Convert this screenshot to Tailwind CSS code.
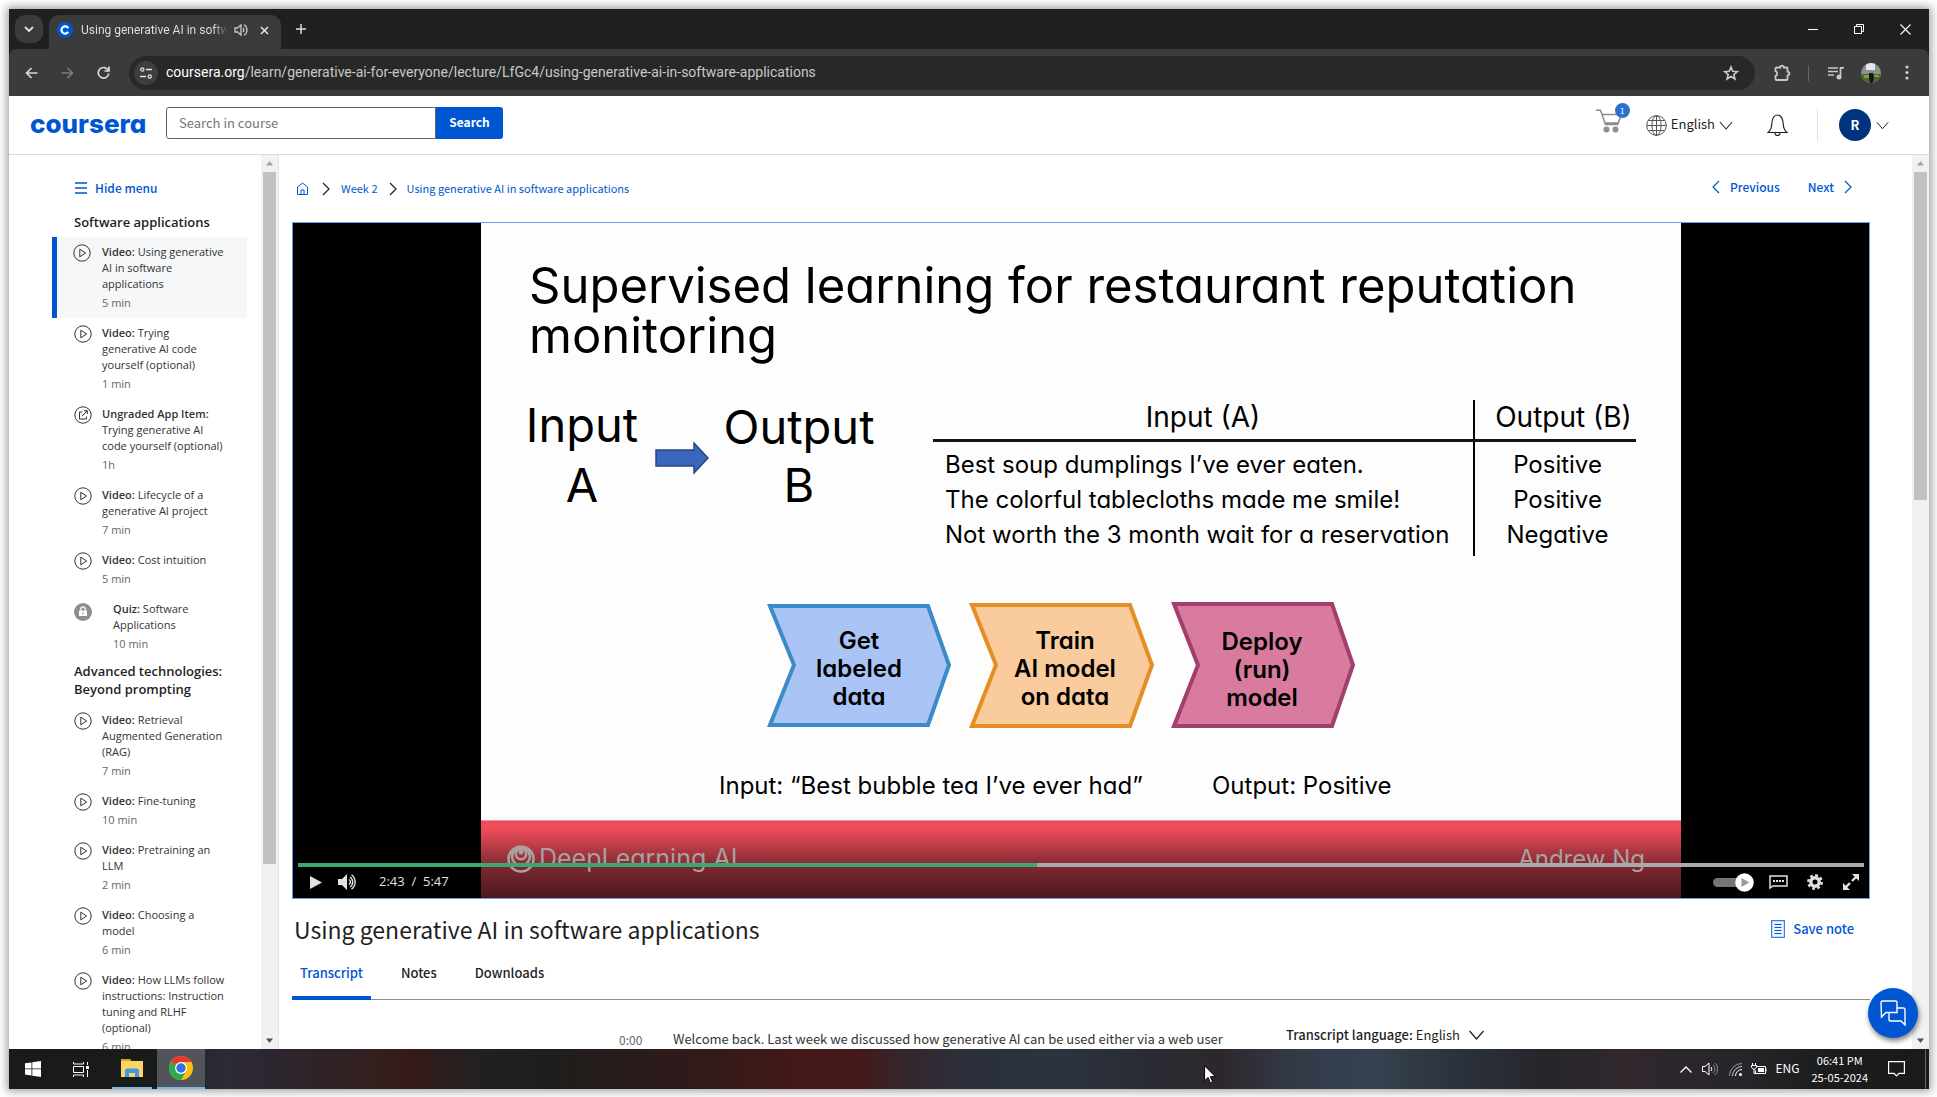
<!DOCTYPE html>
<html lang="en">
<head>
<meta charset="utf-8">
<title>Using generative AI in software applications | Coursera</title>
<script src="https://cdn.jsdelivr.net/npm/@tailwindcss/browser@4"></script>
</head>
<body class="h-screen overflow-hidden bg-white pt-[9px] pl-[9px] pr-2 pb-2 font-['Noto_Sans_CJK_SC','Open_Sans',sans-serif] text-[#1f1f1f]">
<svg class="hidden">
  <symbol id="play" viewBox="0 0 18 18"><circle cx="9" cy="9" r="8.2" fill="none" stroke="#333"/><path d="M6.8 5.2v7.6l5.8-3.8z" fill="none" stroke="#333"/></symbol>
  <symbol id="down" viewBox="0 0 16 10"><path d="M1 1l7 8 7-8" fill="none" stroke="currentColor" stroke-width="1.2"/></symbol>
  <symbol id="right" viewBox="0 0 8 14"><path d="M1 1l6 6-6 6" fill="none" stroke="currentColor" stroke-width="1.2"/></symbol>
  <symbol id="left" viewBox="0 0 8 14"><path d="M7 1L1 7l6 6" fill="none" stroke="currentColor" stroke-width="1.2"/></symbol>
</svg>
<div class="flex h-full flex-col overflow-hidden bg-white shadow-[0_0_9px_2px_rgba(0,0,0,0.4)]">

  <!-- Tab strip -->
  <div class="flex h-10 shrink-0 items-center bg-[#1f2120] text-[#dfe1df]">
    <button aria-label="Search tabs" class="ml-[6px] grid size-7 place-items-center rounded-[10px] bg-[#3b3b3b]"><svg width="10" height="7" viewBox="0 0 10 7"><path d="M1 1l4 4 4-4" fill="none" stroke="#e3e3e3" stroke-width="1.8"/></svg></button>
    <div class="ml-[6px] flex h-[34px] w-[232px] items-center self-end rounded-t-[10px] bg-[#3b3b3b] pb-1 pl-2 font-['Roboto',sans-serif] text-[12px]">
      <svg width="16" height="16" viewBox="0 0 16 16"><circle cx="8" cy="8" r="8" fill="#0056d2"/><path d="M11.2 6.2A3.6 3.6 0 1 0 11.2 9.8" fill="none" stroke="#fff" stroke-width="2.2"/></svg>
      <span class="ml-2 w-[147px] overflow-hidden whitespace-nowrap bg-linear-to-r from-[#e3e3e3] from-90% to-[#3b3b3b] bg-clip-text text-transparent">Using generative AI in software</span>
      <svg class="ml-[6px]" width="14" height="14" viewBox="0 0 14 14"><path d="M1 5h2.500L7 2v10L3.500 9H1z" fill="none" stroke="#c7c7c7" stroke-width="1.300"/><path d="M9 5a3 3 0 0 1 0 4M10 1.800a6 6 0 0 1 0 10.400" fill="none" stroke="#c7c7c7" stroke-width="1.300"/></svg>
      <button aria-label="Close tab" class="ml-3"><svg width="9" height="9" viewBox="0 0 9 9"><path d="M1 1l7 7M8 1L1 8" stroke="#e3e3e3" stroke-width="1.600"/></svg></button>
    </div>
    <button aria-label="New tab" class="ml-[14px]"><svg width="12" height="12" viewBox="0 0 12 12"><path d="M6 1v10M1 6h10" stroke="#dcdcdc" stroke-width="1.500"/></svg></button>
    <div class="ml-auto flex items-center gap-9 pr-[18px]">
      <button aria-label="Minimize"><svg width="10" height="10" viewBox="0 0 10 10"><path d="M0 5.500h10" stroke="#fff"/></svg></button>
      <button aria-label="Restore"><svg width="10" height="10" viewBox="0 0 10 10"><path d="M.5 2.500h7v7h-7zM2.500 2.500v-2h7v7h-2" fill="none" stroke="#fff"/></svg></button>
      <button aria-label="Close"><svg width="11" height="11" viewBox="0 0 11 11"><path d="M.5.5l10 10M10.500.5l-10 10" stroke="#fff" stroke-width="1.100"/></svg></button>
    </div>
  </div>

  <!-- Address bar -->
  <div class="shrink-0 bg-[#1f2120]">
  <div class="flex h-[47px] items-center rounded-t-[8px] bg-[#3b3b3b] pr-5 pl-4">
    <button aria-label="Back"><svg width="13" height="12" viewBox="0 0 13 12"><path d="M12.500 6H1.500M6.500 1l-5 5 5 5" fill="none" stroke="#d8d8d8" stroke-width="1.700"/></svg></button>
    <button aria-label="Forward" class="ml-[23px]"><svg width="13" height="12" viewBox="0 0 13 12"><path d="M.5 6h11M6.500 1l5 5-5 5" fill="none" stroke="#7d7d7d" stroke-width="1.700"/></svg></button>
    <button aria-label="Reload" class="ml-[23px]"><svg width="13" height="13" viewBox="0 0 13 13"><path d="M11.300 4.500A5.300 5.300 0 1 0 11.800 7.500M12 .5v4.500H7.500" fill="none" stroke="#d8d8d8" stroke-width="1.700"/></svg></button>
    <div class="ml-[19px] flex h-[34px] flex-1 items-center rounded-full bg-[#282828] pr-4 pl-[5px]">
      <span class="grid size-6 place-items-center rounded-full bg-[#3e3e3e]"><svg width="12" height="12" viewBox="0 0 12 12"><path d="M6 2.500h6M0 9.500h6" stroke="#e0e0e0" stroke-width="1.600"/><circle cx="2.300" cy="2.500" r="1.600" fill="none" stroke="#e0e0e0" stroke-width="1.300"/><circle cx="9.700" cy="9.500" r="1.600" fill="none" stroke="#e0e0e0" stroke-width="1.300"/></svg></span>
      <span class="ml-2 font-['Roboto',sans-serif] text-[14px] text-[#c7c7c7]"><span class="text-white">coursera.org</span>/learn/generative-ai-for-everyone/lecture/LfGc4/using-generative-ai-in-software-applications</span>
      <svg class="ml-auto" width="16" height="16" viewBox="0 0 24 24"><path d="M12 3l2.600 6.400 6.900.5-5.300 4.400 1.700 6.700-5.900-3.700L6.100 21l1.700-6.700L2.500 9.900l6.900-.5z" fill="none" stroke="#c9c9c9" stroke-width="2.400"/></svg>
    </div>
    <div class="ml-[19px] flex items-center">
      <svg width="17" height="18" viewBox="0 0 17 18"><path d="M2.500 3.500h3.700a1.600 1.600 0 0 1 3.600 0h2.700a1 1 0 0 1 1 1v3.200a1.700 1.700 0 0 1 0 3.600v3.700a1 1 0 0 1-1 1h-10a1 1 0 0 1-1-1v-3.200a2.400 2.400 0 0 0 0-4.600V4.500a1 1 0 0 1 1-1z" fill="none" stroke="#c9c9c9" stroke-width="1.800"/></svg>
      <span class="ml-[17px] h-4 w-px bg-[#666]"></span>
      <svg class="ml-[19px]" width="16" height="14" viewBox="0 0 16 14"><path d="M0 2h10M0 5.500h10M0 9h6" stroke="#c9c9c9" stroke-width="1.700"/><path d="M12.500 11V1.800H16" fill="none" stroke="#c9c9c9" stroke-width="1.700"/><circle cx="11" cy="11" r="2.500" fill="#c9c9c9"/></svg>
      <svg class="ml-[17px]" width="20" height="20" viewBox="0 0 20 20"><defs><clipPath id="av"><circle cx="10" cy="10" r="10"/></clipPath></defs><g clip-path="url(#av)"><path fill="#8d8f91" d="M0 0h20v20H0z"/><path fill="#e4e6e8" d="M5 0h9v7H5z"/><path fill="#4d6b22" d="M0 11h20v9H0z"/><path fill="#7fa03a" d="M3 12h5v3H3zM13 12h5v2h-5z"/><path fill="#15171c" d="M8 10h4l1 4-1 6H9l-1-5z"/></g></svg>
      <svg class="ml-6" width="4" height="15" viewBox="0 0 4 15"><g fill="#d0d0d0"><circle cx="2" cy="2" r="1.600"/><circle cx="2" cy="7.500" r="1.600"/><circle cx="2" cy="13" r="1.600"/></g></svg>
    </div>
  </div>
  </div>

  <!-- Site header -->
  <header class="flex h-[59px] shrink-0 items-center border-b border-[#dadce0] bg-white pr-10 pl-[21px]">
    <a href="#" class="w-[136px] pb-[2px] font-['Inter',sans-serif] text-[26px] leading-8 font-extrabold text-[#0056d2] [font-feature-settings:'cv11']">coursera</a>
    <form class="-mt-1 flex">
      <input aria-label="Search in course" placeholder="Search in course" class="h-8 w-[270px] rounded-l-[3px] border border-[#636363] px-3 pb-[2px] font-['Noto_Sans_CJK_SC',sans-serif] text-[13px] placeholder:text-[#757575]">
      <button type="button" class="h-8 w-[67px] rounded-r-[3px] bg-[#0056d2] pb-[2px] text-[12px] font-bold text-white">Search</button>
    </form>
    <div class="ml-auto flex items-center">
      <a href="#" aria-label="Cart" class="relative -mt-3 block h-7 w-[34px]">
        <svg width="28" height="24" viewBox="0 0 28 24" class="mt-1"><path d="M0 1.200h4.500l5 14.300h13M5.800 5.500h19.500l-3 8.500H8.800" fill="none" stroke="#8a8a8a" stroke-width="1.500"/><circle cx="10.500" cy="20.500" r="3" fill="#8f8f8f"/><circle cx="19.500" cy="20.500" r="3" fill="#8f8f8f"/></svg>
        <span class="absolute -top-[2px] right-0 grid size-[15px] place-items-center rounded-full bg-[#2a73cc] text-[8px] leading-none text-white">1</span>
      </a>
      <button class="ml-4 flex items-center text-[13px]">
        <svg width="21" height="21" viewBox="0 0 21 21"><g fill="none" stroke="#555"><circle cx="10.500" cy="10.500" r="9.800"/><ellipse cx="10.500" cy="10.500" rx="4.600" ry="9.800"/><path d="M10.500.7v19.600M.7 10.500h19.600M2.200 5.500h16.600M2.200 15.500h16.600"/></g></svg>
        <span class="ml-1 pb-[2px]">English</span>
        <svg class="ml-1" width="14" height="9"><use href="#down"/></svg>
      </button>
      <button aria-label="Notifications" class="ml-[34px]"><svg width="21" height="23" viewBox="0 0 21 23"><path d="M1 18.500c2.500-2 3.500-4 3.700-8C5 5 6.500 1 10.500 1s5.500 4 5.800 9.500c.2 4 1.200 6 3.700 8zM8 19a2.500 2.500 0 0 0 5 0" fill="none" stroke="#1f1f1f" stroke-width="1.200"/></svg></button>
      <span class="ml-[29px] h-8 w-px bg-[#e0e0e0]"></span>
      <button class="ml-[21px] flex items-center">
        <span class="grid size-8 place-items-center rounded-full bg-[#00337d] text-[13px] font-bold text-white">R</span>
        <svg class="ml-[5px]" width="13" height="9"><use href="#down"/></svg>
      </button>
    </div>
  </header>

  <div class="relative flex min-h-0 flex-1">
    <!-- Course sidebar -->
    <aside class="flex w-[270px] shrink-0 border-r border-[#e5e5e5]">
      <div class="flex-1 overflow-hidden pr-[14px] pl-[43px] font-['Open_Sans',sans-serif]">
        <button class="mt-[23px] ml-[23px] flex items-center gap-2 font-['Noto_Sans_CJK_SC',sans-serif] text-[12px] leading-5 font-medium text-[#0056d2]">
          <svg width="12" height="12" viewBox="0 0 12 12"><path d="M0 1h12M0 6h12M0 11h12" stroke="#0056d2" stroke-width="1.600"/></svg>Hide menu</button>
        <h2 class="mt-[15px] pl-[22px] text-[13px] leading-[18px] font-semibold">Software applications</h2>
        <ul class="mt-[6px] text-[11px] leading-4 text-[#333]">
          <li><a href="#" class="flex border-l-[5px] border-[#0056d2] bg-[#f5f7f8] pt-[7px] pr-4 pb-[6px] pl-4"><svg class="mr-[11px] size-[18px] shrink-0"><use href="#play"/></svg><span><span class="font-semibold">Video:</span> Using generative AI in software applications<span class="block pt-[2px] leading-[18px] text-[#666]">5 min</span></span></a></li>
          <li><a href="#" class="flex pt-[7px] pr-4 pb-[6px] pl-[22px]"><svg class="mr-[10px] size-[18px] shrink-0"><use href="#play"/></svg><span><span class="font-semibold">Video:</span> Trying<br>generative AI code yourself (optional)<span class="block pt-[2px] leading-[18px] text-[#666]">1 min</span></span></a></li>
          <li><a href="#" class="flex pt-[7px] pr-4 pb-[6px] pl-[22px]"><svg class="mr-[10px] size-[18px] shrink-0" viewBox="0 0 18 18"><g fill="none" stroke="#333"><circle cx="9" cy="9" r="8.200"/><path d="M8.200 6H5.500v7h7v-2.500M8 10.200l5-5.200M10 4.700h3.300V8"/></g></svg><span><span class="font-semibold">Ungraded App Item:</span> Trying generative AI<br>code yourself (optional)<span class="block pt-[2px] leading-[18px] text-[#666]">1h</span></span></a></li>
          <li><a href="#" class="flex pt-[7px] pr-4 pb-[6px] pl-[22px]"><svg class="mr-[10px] size-[18px] shrink-0"><use href="#play"/></svg><span><span class="font-semibold">Video:</span> Lifecycle of a generative AI project<span class="block pt-[2px] leading-[18px] text-[#666]">7 min</span></span></a></li>
          <li><a href="#" class="flex pt-[7px] pr-4 pb-[6px] pl-[22px]"><svg class="mr-[10px] size-[18px] shrink-0"><use href="#play"/></svg><span><span class="font-semibold">Video:</span> Cost intuition<span class="block pt-[2px] leading-[18px] text-[#666]">5 min</span></span></a></li>
          <li><a href="#" class="flex pt-[7px] pr-4 pb-[6px] pl-[22px]"><svg class="mt-[2px] mr-[21px] size-[18px] shrink-0" viewBox="0 0 18 18"><circle cx="9" cy="9" r="9" fill="#8f8f8f"/><path d="M5 7.500h8V13H5z" fill="#fff"/><path d="M6.800 7.500V6a2.200 2.200 0 0 1 4.400 0v1.500" fill="none" stroke="#fff" stroke-width="1.300"/><circle cx="9" cy="10.300" r=".8" fill="#8f8f8f"/></svg><span><span class="font-semibold">Quiz:</span> Software Applications<span class="block pt-[2px] leading-[18px] text-[#666]">10 min</span></span></a></li>
        </ul>
        <h2 class="mt-[3px] pl-[22px] text-[13px] leading-[18px] font-semibold">Advanced technologies: Beyond prompting</h2>
        <ul class="mt-[7px] text-[11px] leading-4 text-[#333]">
          <li><a href="#" class="flex pt-[7px] pr-4 pb-[6px] pl-[22px]"><svg class="mr-[10px] size-[18px] shrink-0"><use href="#play"/></svg><span><span class="font-semibold">Video:</span> Retrieval Augmented Generation (RAG)<span class="block pt-[2px] leading-[18px] text-[#666]">7 min</span></span></a></li>
          <li><a href="#" class="flex pt-[7px] pr-4 pb-[6px] pl-[22px]"><svg class="mr-[10px] size-[18px] shrink-0"><use href="#play"/></svg><span><span class="font-semibold">Video:</span> Fine-tuning<span class="block pt-[2px] leading-[18px] text-[#666]">10 min</span></span></a></li>
          <li><a href="#" class="flex pt-[7px] pr-4 pb-[6px] pl-[22px]"><svg class="mr-[10px] size-[18px] shrink-0"><use href="#play"/></svg><span><span class="font-semibold">Video:</span> Pretraining an LLM<span class="block pt-[2px] leading-[18px] text-[#666]">2 min</span></span></a></li>
          <li><a href="#" class="flex pt-[7px] pr-4 pb-[6px] pl-[22px]"><svg class="mr-[10px] size-[18px] shrink-0"><use href="#play"/></svg><span><span class="font-semibold">Video:</span> Choosing a<br>model<span class="block pt-[2px] leading-[18px] text-[#666]">6 min</span></span></a></li>
          <li><a href="#" class="flex pt-[7px] pr-4 pb-[6px] pl-[22px]"><svg class="mr-[10px] size-[18px] shrink-0"><use href="#play"/></svg><span><span class="font-semibold">Video:</span> How LLMs follow instructions: Instruction tuning and RLHF (optional)<span class="block pt-[2px] leading-[18px] text-[#666]">6 min</span></span></a></li>
        </ul>
      </div>
      <div class="flex w-[17px] shrink-0 flex-col items-center bg-[#f1f1f1]">
        <svg class="my-[6px] shrink-0" width="7" height="5"><path d="M0 4.500h7L3.500 0z" fill="#a3a3a3"/></svg>
        <div class="h-[692px] w-[13px] shrink-0 bg-[#c1c1c1]"></div>
        <svg class="mt-auto mb-[6px] shrink-0" width="7" height="5"><path d="M0 .5h7L3.500 5z" fill="#505050"/></svg>
      </div>
    </aside>

    <!-- Lecture -->
    <main class="min-w-0 flex-1 overflow-hidden pr-[42px] pl-[13px]">
      <div class="flex h-[67px] items-center justify-between text-[#0056d2]">
        <nav class="flex items-center text-[11px]">
          <a href="#" aria-label="Home" class="ml-1"><svg width="13" height="13" viewBox="0 0 13 13"><path d="M1.500 5v7.500h10V5L6.500 1zM5 12.500V8h3v4.500" fill="none" stroke="#0056d2"/></svg></a>
          <svg class="ml-[13px] text-[#1f1f1f]" width="8" height="14"><use href="#right"/></svg>
          <a href="#" class="ml-[11px]">Week 2</a>
          <svg class="ml-[11px] text-[#1f1f1f]" width="8" height="14"><use href="#right"/></svg>
          <a href="#" class="ml-[10px]">Using generative AI in software applications</a>
        </nav>
        <div class="flex items-center pr-[18px] pb-1 text-[12px] font-medium">
          <a href="#" class="flex items-center gap-[10px]"><svg width="8" height="14"><use href="#left"/></svg>Previous</a>
          <a href="#" class="ml-7 flex items-center gap-[10px]">Next<svg width="8" height="14"><use href="#right"/></svg></a>
        </div>
      </div>

      <!-- Video player -->
      <section class="relative h-[677px] border border-[#6b9bea] bg-black">
        <div class="relative mx-auto h-full w-[1200px] overflow-hidden bg-[#fdfdfd] font-['Inter',sans-serif] text-black [font-feature-settings:'cv11']">
          <h3 class="absolute top-[38px] left-12 text-[49px] leading-[50px] whitespace-nowrap">Supervised learning for restaurant reputation<br>monitoring</h3>
          <div class="absolute top-[172px] left-[36px] w-[130px] text-center text-[47px] leading-[60px]">Input<br>A</div>
          <svg class="absolute top-[219px] left-[174px]" width="54" height="32" viewBox="0 0 54 32"><path d="M1 8h38V1l14 15-14 15v-7H1z" fill="#3a66bd" stroke="#28477f" stroke-width="1.500"/></svg>
          <div class="absolute top-[175px] left-[228px] w-[180px] text-center text-[47px] leading-[58px]">Output<br>B</div>
          <table class="absolute top-[177px] left-[452px] w-[703px] border-collapse text-[24px] leading-[35px] whitespace-nowrap">
            <thead><tr class="border-b-[3px] border-[#151515] text-[28px]"><th class="w-[541px] border-r-2 border-black pb-1 font-normal">Input (A)</th><th class="pb-1 pl-4 font-normal">Output (B)</th></tr></thead>
            <tbody><tr><td class="border-r-2 border-black pt-[5px] pl-3">Best soup dumplings I’ve ever eaten.</td><td class="pt-[5px] pl-1 text-center">Positive</td></tr>
            <tr><td class="border-r-2 border-black pl-3">The colorful tablecloths made me smile!</td><td class="pl-1 text-center">Positive</td></tr>
            <tr><td class="border-r-2 border-black pb-1 pl-3">Not worth the 3 month wait for a reservation</td><td class="pb-1 pl-1 text-center">Negative</td></tr></tbody>
          </table>
          <svg class="absolute top-[379px] left-[286px]" width="590" height="128" viewBox="0 0 590 128"><g stroke-width="4"><path d="M3 4h158l21 59-21 60H3l24-60z" fill="#a9c4f5" stroke="#3d8ac9"/><path d="M205 3h158l22 60-22 61H205l24-61z" fill="#facb9c" stroke="#e38f25"/><path d="M407 2h158l21 61-21 61H407l24-61z" fill="#d87b9f" stroke="#a23f6e"/></g></svg>
          <div class="absolute top-[404px] left-[323px] w-[110px] text-center text-[24px] leading-7 font-semibold">Get<br>labeled<br>data</div>
          <div class="absolute top-[404px] left-[519px] w-[130px] text-center text-[24px] leading-7 font-semibold">Train<br>AI model<br>on data</div>
          <div class="absolute top-[405px] left-[726px] w-[110px] text-center text-[24px] leading-7 font-semibold">Deploy<br>(run)<br>model</div>
          <div class="absolute top-[547px] left-[238px] text-[24px] leading-8 whitespace-nowrap">Input: “Best bubble tea I’ve ever had”</div>
          <div class="absolute top-[547px] left-[731px] text-[24px] leading-8 whitespace-nowrap">Output: Positive</div>
          <div class="absolute inset-x-0 bottom-0 flex h-[78px] items-center justify-between border-t border-[#f3939b] bg-linear-to-b from-[#f04d5b] from-10% via-[#7d2830] via-60% to-[#4c191e] px-[26px] pb-[2px] text-[25px] text-[#aaa09f]">
            <span class="flex items-center gap-1"><svg width="28" height="28" viewBox="0 0 28 28"><g fill="none" stroke="#aaa09f" stroke-width="2.600"><circle cx="14" cy="14" r="12.500"/><circle cx="14" cy="11.500" r="9"/><circle cx="14" cy="9" r="5.200"/></g><circle cx="14" cy="7" r="2.500" fill="#aaa09f"/></svg>DeepLearning.AI</span>
            <span class="pr-[10px] text-[24px]">Andrew Ng</span>
          </div>
        </div>
        <div class="absolute inset-x-[5px] bottom-[31px] h-1 bg-[#aaa]"><div class="h-full bg-[#3aa971]" style="width:47.200%"></div></div>
        <div class="absolute inset-x-0 bottom-0 flex h-8 items-center pr-[10px] pl-[17px] font-['Open_Sans',sans-serif] text-[13px] text-[#e2e2e2]">
          <button aria-label="Pause"><svg width="12" height="13"><path d="M0 0v13l12-6.500z" fill="#e2e2e2"/></svg></button>
          <button aria-label="Mute" class="ml-4"><svg width="19" height="16" viewBox="0 0 19 16"><path d="M0 5h4l5-5v16l-5-5H0z" fill="#e2e2e2"/><path d="M11 5.500a3 3 0 0 1 0 5M12 3a6 6 0 0 1 0 10M13.500.8a9 9 0 0 1 0 14.400" fill="none" stroke="#e2e2e2" stroke-width="1.400"/></svg></button>
          <span class="ml-[22px] whitespace-pre">2:43  /  5:47</span>
          <button aria-label="Autoplay" class="ml-auto"><svg width="41" height="19" viewBox="0 0 41 19"><rect y="5" width="34" height="9" rx="4.500" fill="#757575"/><circle cx="31.500" cy="9.500" r="9.300" fill="#fff"/><path d="M28.500 5v9l8-4.500z" fill="#9a9a9a"/></svg></button>
          <button aria-label="Subtitles" class="ml-[15px]"><svg width="19" height="14" viewBox="0 0 19 14"><path d="M1 13V1h17v10H4z" fill="none" stroke="#e2e2e2" stroke-width="1.500"/><path d="M4 6h11" stroke="#e2e2e2" stroke-width="2" stroke-dasharray="2 1"/></svg></button>
          <button aria-label="Settings" class="ml-[19px]"><svg width="16" height="16" viewBox="0 0 16 16"><circle cx="8" cy="8" r="4.200" fill="none" stroke="#e2e2e2" stroke-width="3.400"/><circle cx="8" cy="8" r="6.700" fill="none" stroke="#e2e2e2" stroke-width="2.400" stroke-dasharray="2.800 2.460"/></svg></button>
          <button aria-label="Full screen" class="ml-5"><svg width="16" height="16" viewBox="0 0 16 16"><path d="M9 0h7v7zM0 9v7h7z" fill="#e2e2e2"/><path d="M14 2L9 7M7 9l-5 5" stroke="#e2e2e2" stroke-width="2.400"/></svg></button>
        </div>
      </section>

      <div class="flex h-[63px] items-center justify-between pr-4 pb-[3px] pl-[2px]">
        <h1 class="text-[23px] leading-8">Using generative AI in software applications</h1>
        <button class="flex items-center gap-2 text-[13px] font-medium text-[#0056d2]"><svg width="14" height="18" viewBox="0 0 14 18"><path d="M.6.600h12.800v16.800H.6z" fill="#eef4ff" stroke="#3f7fe0" stroke-width="1.200"/><path d="M3.500 4.500h7M3.500 7.500h7M3.500 10.500h7M3.500 13.500h7" stroke="#0056d2"/></svg>Save note</button>
      </div>
      <div class="flex h-[38px] gap-[22px] border-b border-[#8f8f8f] text-[13px] font-medium">
        <button class="h-[38px] border-b-4 border-[#0056d2] px-2 pb-3 text-[#0056d2]">Transcript</button>
        <button class="px-2 pb-4">Notes</button>
        <button class="px-2 pb-4">Downloads</button>
      </div>
      <div class="flex pt-[23px] text-[13px] leading-6">
        <span class="ml-[327px] w-[54px] pt-[5px] text-[12px] text-[#666]">0:00</span>
        <p class="w-[613px] pt-1 whitespace-nowrap text-[#333]">Welcome back. Last week we discussed how generative AI can be used either via a web user</p>
        <button class="flex h-6 items-center gap-2"><span><span class="font-medium">Transcript language:</span> English</span><svg width="17" height="10"><use href="#down"/></svg></button>
      </div>
    </main>
    <div class="flex w-[17px] shrink-0 flex-col items-center bg-[#f1f1f1]">
      <svg class="my-[6px] shrink-0" width="7" height="5"><path d="M0 4.500h7L3.500 0z" fill="#a3a3a3"/></svg>
      <div class="h-[328px] w-[13px] shrink-0 bg-[#c1c1c1]"></div>
      <svg class="mt-auto mb-[6px] shrink-0" width="7" height="5"><path d="M0 .5h7L3.500 5z" fill="#505050"/></svg>
    </div>
    <button aria-label="Chat" class="absolute right-[11px] bottom-[11px] grid size-[50px] place-items-center rounded-full bg-[#0056d2] shadow-[1px_3px_5px_rgba(0,0,0,0.5)]"><svg width="26" height="26" viewBox="0 0 26 26"><path d="M1 2.500A1.500 1.500 0 0 1 2.500 1h13A1.500 1.500 0 0 1 17 2.500v10H6l-4.500 4.500zM17 8h6.500A1.500 1.500 0 0 1 25 9.500V25l-4-4H10.500A1.500 1.500 0 0 1 9 19.500V12.500" fill="none" stroke="#fff" stroke-width="1.400"/></svg></button>
  </div>

  <!-- Taskbar -->
  <footer class="relative flex h-10 shrink-0 items-center bg-[linear-gradient(90deg,#191a1a_0%,#191a1a_8%,#2b2b38_11%,#2d252f_14%,#33201f_19%,#36191a_21%,#232020_24%,#1f1e1c_28%,#2e1a1a_35%,#431917_41%,#451917_44%,#33272f_47%,#2b303b_50%,#2c333f_55%,#292a31_60%,#2d272c_63%,#333a48_67%,#354250_71%,#2a303a_76%,#26262b_80%,#30272d_84%,#27262a_90%,#1b1c1c_95%,#191a1a_100%)] font-['Noto_Sans_CJK_SC',sans-serif] text-[12px] text-white">
    <button aria-label="Start" class="ml-4"><svg width="16" height="16" viewBox="0 0 16 16"><path d="M0 2.300L6.500 1.400v6.100H0zM7.300 1.300L16 0v7.500H7.300zM0 8.300h6.500v6.200L0 13.600zM7.300 8.300H16V16l-8.700-1.300z" fill="#fff"/></svg></button>
    <button aria-label="Task view" class="ml-8"><svg width="16" height="15" viewBox="0 0 16 15"><path d="M.5 4.500h10v6H.5zM.5 0v2h10V0M.5 15v-2h10v2M14.500 0v3M14.500 8v7" fill="none" stroke="#fff"/><path d="M13 4h3v3h-3z" fill="#fff"/></svg></button>
    <button aria-label="File Explorer" class="ml-[23px] flex h-full w-10 items-center justify-center border-b-2 border-[#76b9ed]"><svg width="22" height="18" viewBox="0 0 22 18"><path d="M0 0h9l2 2.500h-11z" fill="#e0a11b"/><path d="M0 2h22v16H0z" fill="#fdd467"/><path d="M4 18v-7l2-1.500h10l2 1.500v7h-4v-4H8v4z" fill="#3f9be0"/></svg></button>
    <button aria-label="Chrome" class="ml-[5px] flex h-full w-12 items-center justify-center border-b-2 border-[#76b9ed] bg-[#515459]"><svg width="24" height="24" viewBox="0 0 24 24"><circle cx="12" cy="12" r="12" fill="#fbc116"/><path d="M12 12L1.600 6A12 12 0 0 1 22.400 6z" fill="#e33b2e"/><path d="M1.600 6A12 12 0 0 0 12 24l5.200-9L12 12z" fill="#2da94f"/><path d="M12 6h10.400L17.200 15 12 12z" fill="#fbc116"/><circle cx="12" cy="12" r="6" fill="#fff"/><circle cx="12" cy="12" r="4.700" fill="#3372e5"/></svg></button>
    <div class="ml-auto flex h-full items-center">
      <svg width="12" height="7" viewBox="0 0 12 7"><path d="M.5 6.500l5.500-5.500 5.500 5.500" fill="none" stroke="#fff" stroke-width="1.300"/></svg>
      <svg class="ml-[10px]" width="16" height="14" viewBox="0 0 16 14"><path d="M.5 4.500h2.500l4-3.500v12L3 9.500H.5z" fill="none" stroke="#fff"/><path d="M9 5a3 3 0 0 1 0 4" fill="none" stroke="#fff"/><path d="M11 3a5 5 0 0 1 0 8M13 1a8 8 0 0 1 0 12" fill="none" stroke="#888"/></svg>
      <svg class="ml-[11px]" width="13" height="13" viewBox="0 0 13 13"><g fill="none" stroke="#999"><path d="M.5 13A12.500 12.500 0 0 1 13 .5"/><path d="M3.500 13A9.500 9.500 0 0 1 13 3.500" stroke="#ccc"/><path d="M6.500 13A6.500 6.500 0 0 1 13 6.500" stroke="#fff"/></g><circle cx="11.500" cy="11.500" r="1.500" fill="#fff"/></svg>
      <svg class="ml-[9px]" width="16" height="12" viewBox="0 0 16 12"><path d="M5.500 3.500h9v7h-10v-3M15 5.500v3M1.500 0v2M4.500 0v2M.5 2.500h5v2L3 6.500.5 4.500zM3 6v4.500h2" fill="none" stroke="#fff"/><path d="M7 5h6v4H7z" fill="#fff"/></svg>
      <span class="ml-[9px] pb-[2px]">ENG</span>
      <time class="ml-3 text-center text-[11px] leading-[17px]">06:41 PM<br>25-05-2024</time>
      <svg class="ml-5" width="17" height="16" viewBox="0 0 17 16"><path d="M.6.600h15.800v11.800H11L8.500 15 6 12.400H.6z" fill="none" stroke="#fff" stroke-width="1.200"/></svg>
      <span class="ml-5 h-full w-1 border-l border-[#666]"></span>
    </div>
    <svg class="absolute top-4 left-[1195px]" width="12" height="19" viewBox="0 0 12 19"><path d="M.6.800v15l3.500-3.300 2.300 5.400 2.300-1-2.300-5.200h5z" fill="#fff" stroke="#000"/></svg>
  </footer>
</div>
</body>
</html>
